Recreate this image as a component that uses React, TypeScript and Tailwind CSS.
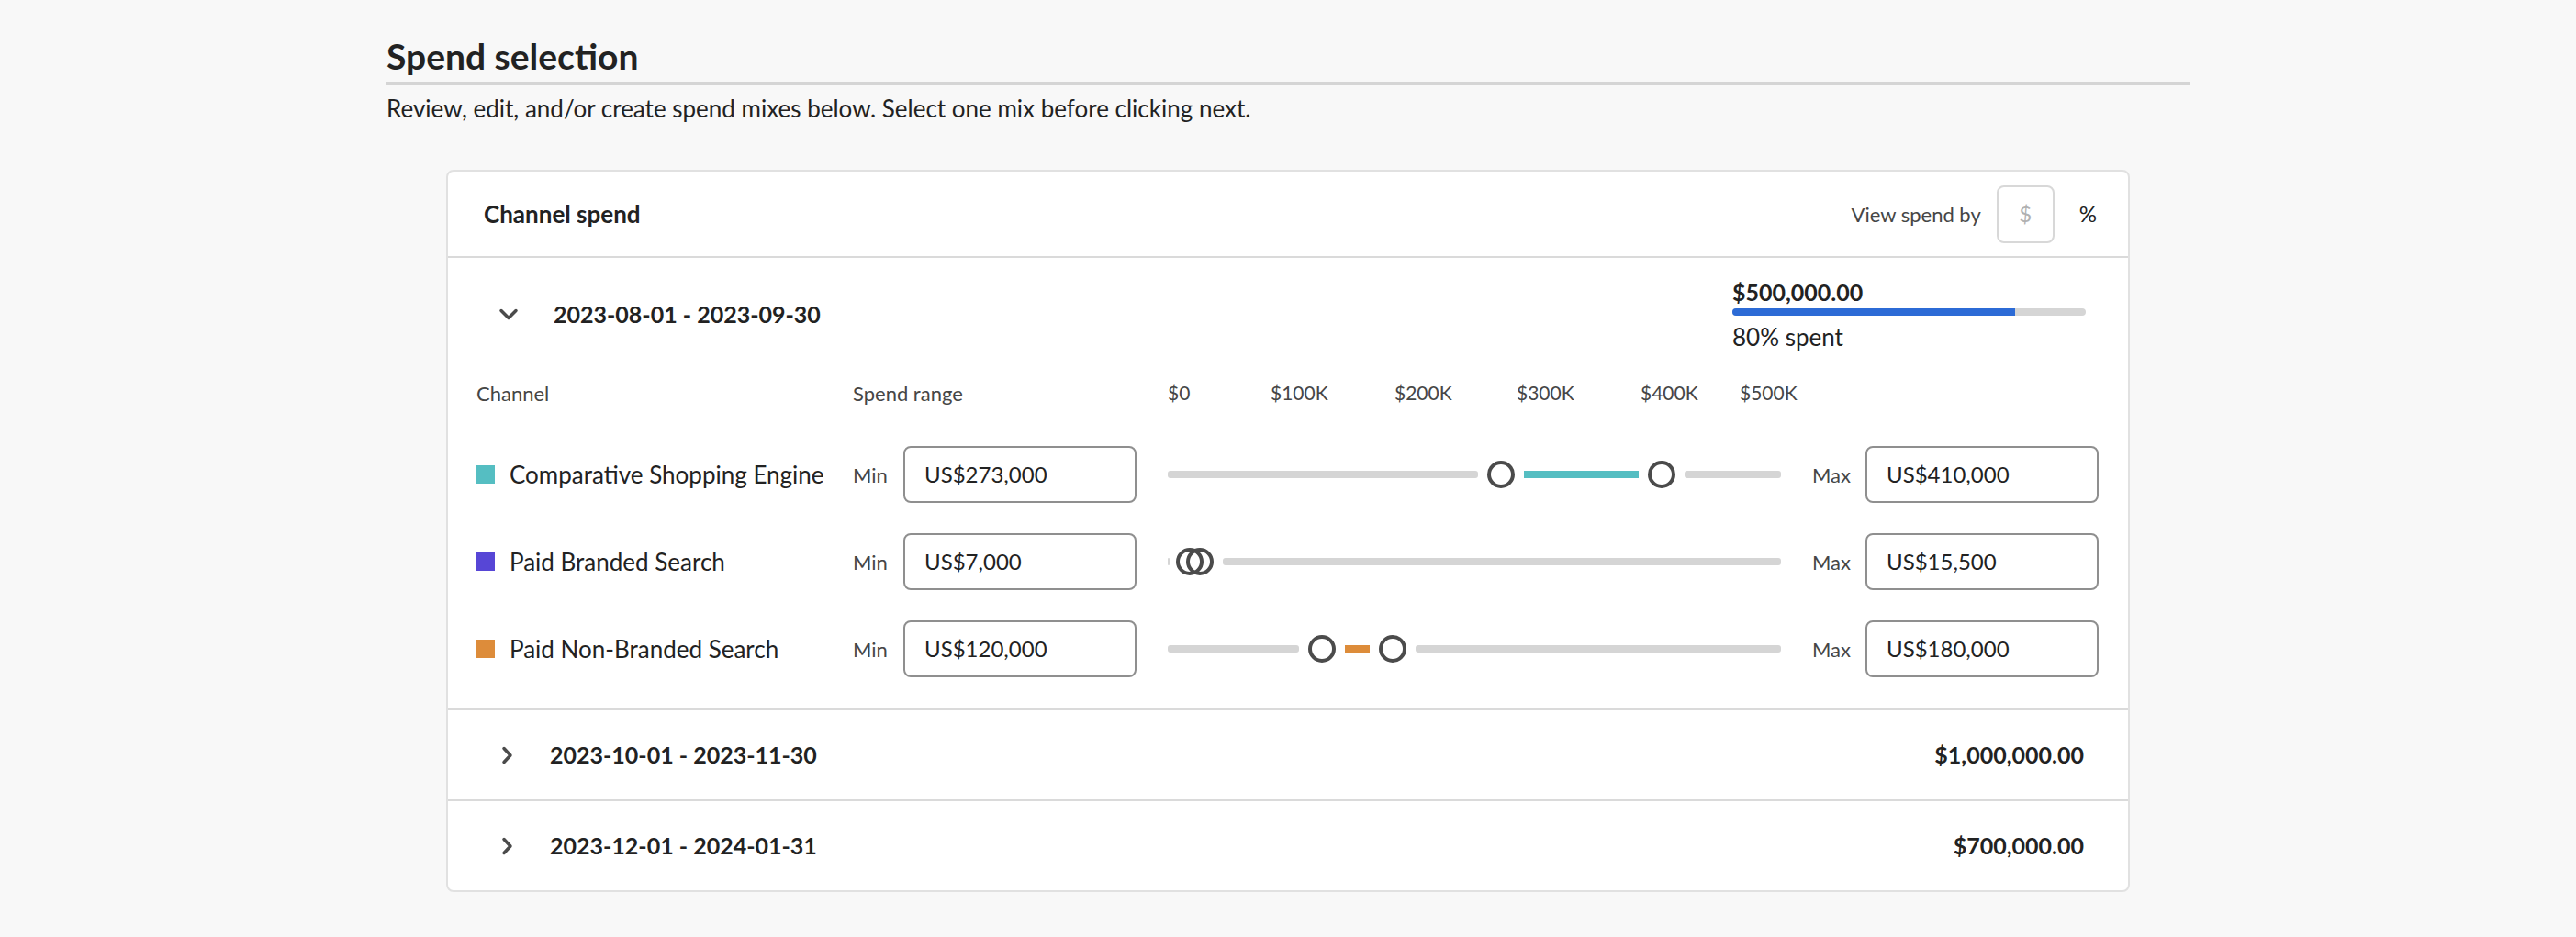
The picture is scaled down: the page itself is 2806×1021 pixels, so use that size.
import React from "react";

type Channel = {
  name: string;
  swatch: string;
  min: number;
  max: number;
};

const CHANNELS: Channel[] = [
  { name: "Comparative Shopping Engine", swatch: "bg-[#55bec2]", min: 273000, max: 410000 },
  { name: "Paid Branded Search", swatch: "bg-[#5746d6]", min: 7000, max: 15500 },
  { name: "Paid Non-Branded Search", swatch: "bg-[#dd8c3a]", min: 120000, max: 180000 },
];

const TICKS = [
  { label: "$0", left: "left-[0px]" },
  { label: "$100K", left: "left-[112px]" },
  { label: "$200K", left: "left-[247px]" },
  { label: "$300K", left: "left-[380px]" },
  { label: "$400K", left: "left-[515px]" },
  { label: "$500K", left: "left-[623px]" },
];

const TRACK = 668;
const THUMB = 30;
const MAX_VALUE = 500000;
const GAP = 10;

const fmt = (n: number) => "US$" + n.toLocaleString("en-US");

function ChevronDown() {
  return (
    <svg width="22" height="13" viewBox="0 0 22 13" fill="none">
      <path d="M3 2.5l8 8 8-8" stroke="#4b4b4b" strokeWidth="3.5" strokeLinecap="round" strokeLinejoin="round" />
    </svg>
  );
}

function ChevronRight() {
  return (
    <svg width="13" height="20" viewBox="0 0 13 20" fill="none">
      <path d="M3 2.5l7 7.5-7 7.5" stroke="#4b4b4b" strokeWidth="3.5" strokeLinecap="round" strokeLinejoin="round" />
    </svg>
  );
}

function RangeSlider({ min, max, fill }: { min: number; max: number; fill: string }) {
  const c1 = THUMB / 2 + (min / MAX_VALUE) * (TRACK - THUMB);
  const c2 = THUMB / 2 + (max / MAX_VALUE) * (TRACK - THUMB);
  const leftEnd = Math.max(c1 - THUMB / 2 - GAP, 2);
  const midStart = c1 + THUMB / 2 + GAP;
  const midEnd = c2 - THUMB / 2 - GAP;
  const rightStart = c2 + THUMB / 2 + GAP;

  return (
    <div className="relative h-[30px] w-[668px] shrink-0">
      <div className="absolute top-[11px] left-0 h-[8px] rounded-[3px] bg-[#d5d5d5]" style={{ width: leftEnd }} />
      {midEnd > midStart && (
        <div className={`absolute top-[11px] h-[8px] ${fill}`} style={{ left: midStart, width: midEnd - midStart }} />
      )}
      <div className="absolute top-[11px] right-0 h-[8px] rounded-[3px] bg-[#d5d5d5]" style={{ left: rightStart }} />
      {/* thumbs */}
      <div className="absolute top-0 h-[30px] w-[30px] rounded-full border-[4px] border-[#4b4b4b]" style={{ left: c1 - THUMB / 2 }} />
      <div className="absolute top-0 h-[30px] w-[30px] rounded-full border-[4px] border-[#4b4b4b]" style={{ left: c2 - THUMB / 2 }} />
    </div>
  );
}

function MoneyInput({ value }: { value: number }) {
  return (
    <div className="flex h-[62px] w-[254px] shrink-0 items-center rounded-[8px] border-2 border-[#8f8f8f] bg-white pl-[21px] text-[24px] text-[#222]">
      {fmt(value)}
    </div>
  );
}

function ChannelRow({ channel }: { channel: Channel }) {
  return (
    <div className="flex h-[62px] items-center">
      <div className="flex w-[410px] shrink-0 items-center gap-[16px]">
        <span className={`h-[20px] w-[20px] ${channel.swatch}`} />
        <span className="text-[26px] text-[#222]">{channel.name}</span>
      </div>
      <span className="w-[55px] shrink-0 text-[22px] text-[#464646]">Min</span>
      <MoneyInput value={channel.min} />
      <div className="w-[34px] shrink-0" />
      <RangeSlider min={channel.min} max={channel.max} fill={channel.swatch} />
      <div className="w-[34px] shrink-0" />
      <span className="w-[58px] shrink-0 text-[22px] text-[#464646]">Max</span>
      <MoneyInput value={channel.max} />
    </div>
  );
}

function CollapsedPeriod({ range, total }: { range: string; total: string }) {
  return (
    <div className="flex h-[99px] items-center justify-between border-t-2 border-[#dadada] pr-[48px] pl-[58px]">
      <div className="flex items-center gap-[40px]">
        <ChevronRight />
        <span className="text-[25px] font-bold text-[#222]">{range}</span>
      </div>
      <span className="text-[25px] font-bold text-[#222]">{total}</span>
    </div>
  );
}

export default function App() {
  return (
    <div className="min-h-screen bg-[#f8f8f8] [font-family:Lato,sans-serif] text-[#222]">
      <div className="mx-auto w-[1964px] pt-[38px]">
        <h1 className="text-[39px] leading-[46px] font-bold text-[#222]">Spend selection</h1>
        <div className="mt-[5px] h-[4px] bg-[#d5d5d5]" />
        <p className="mt-[9px] text-[26px] leading-[32px] text-[#222]">
          Review, edit, and/or create spend mixes below. Select one mix before clicking next.
        </p>

        <div className="mx-[65px] mt-[51px] rounded-[8px] border-2 border-[#e1e1e1] bg-white">
          {/* card header */}
          <div className="flex h-[92px] items-center justify-between pr-[34px] pl-[39px]">
            <span className="text-[26px] font-bold text-[#222]">Channel spend</span>
            <div className="flex items-center">
              <span className="text-[22px] text-[#464646]">View spend by</span>
              <div className="ml-[17px] flex h-[63px] w-[63px] items-center justify-center rounded-[8px] border-2 border-[#d8d8d8] text-[24px] text-[#b1b1b1]">
                $
              </div>
              <span className="ml-[27px] text-[24px] text-[#222]">%</span>
            </div>
          </div>

          {/* expanded period */}
          <div className="border-t-2 border-[#dadada] pt-[22px] pb-[34px]">
            <div className="flex items-center justify-between pr-[46px] pl-[55px]">
              <div className="flex items-center gap-[38px]">
                <ChevronDown />
                <span className="text-[25px] font-bold text-[#222]">2023-08-01 - 2023-09-30</span>
              </div>
              <div className="w-[385px]">
                <div className="text-[25px] leading-[30px] font-bold text-[#222]">$500,000.00</div>
                <div className="mt-[3px] h-[8px] w-full rounded-full bg-[#d5d5d5]">
                  <div className="h-full w-[80%] rounded-l-full bg-[#2c6bd6]" />
                </div>
                <div className="mt-[8px] text-[26px] leading-[30px] text-[#222]">80% spent</div>
              </div>
            </div>

            <div className="px-[31px]">
              <div className="mt-[32px] flex h-[28px] items-center text-[22px] text-[#464646]">
                <span className="w-[410px] shrink-0">Channel</span>
                <span className="w-[343px] shrink-0">Spend range</span>
                <div className="relative h-[28px] w-[668px] shrink-0 text-[21px]">
                  {TICKS.map((t) => (
                    <span key={t.label} className={`absolute top-0 ${t.left} leading-[28px]`}>
                      {t.label}
                    </span>
                  ))}
                </div>
              </div>

              <div className="mt-[44px] flex flex-col gap-[33px]">
                {CHANNELS.map((c) => (
                  <ChannelRow key={c.name} channel={c} />
                ))}
              </div>
            </div>
          </div>

          <CollapsedPeriod range="2023-10-01 - 2023-11-30" total="$1,000,000.00" />
          <CollapsedPeriod range="2023-12-01 - 2024-01-31" total="$700,000.00" />
        </div>
      </div>
    </div>
  );
}
